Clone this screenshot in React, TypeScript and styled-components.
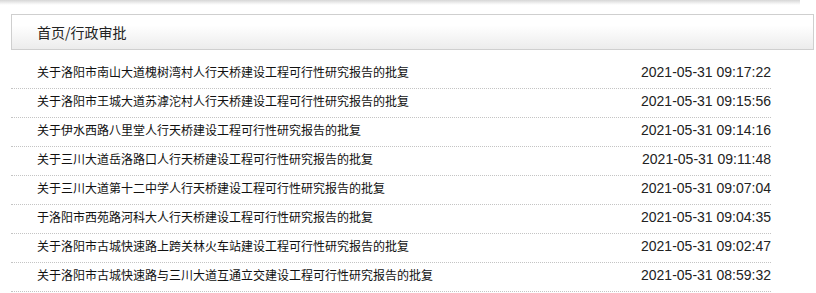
import styled, { createGlobalStyle } from "styled-components";

const GlobalStyle = createGlobalStyle`
  body {
    margin: 0;
    background: #fff;
    font-family: "Liberation Sans", "Noto Sans CJK SC", sans-serif;
    color: #222;
  }
`;

const Page = styled.div`
  width: 800px;
`;

const TopShade = styled.div`
  height: 5px;
  background: linear-gradient(#d6d6d6, #f4f4f4 70%, #fff);
`;

const Crumb = styled.div`
  margin: 9px 0 0 11px;
  width: 776px;
  height: 34px;
  border: 1px solid #cfcfcf;
  background: linear-gradient(#fff 30%, #ececec);
  padding-left: 25px;
  box-sizing: content-box;
  font-family: "Noto Sans CJK SC", sans-serif;
  font-size: 14px;
  line-height: 34px;
  color: #222;
`;

const List = styled.ul`
  list-style: none;
  margin: 10px 0 0 11px;
  padding: 0;
  width: 760px;
`;

const Row = styled.li`
  display: flex;
  justify-content: space-between;
  align-items: baseline;
  height: 28px;
  padding-left: 26px;
  border-bottom: 1px dotted #c4c4c4;
`;

const Title = styled.a`
  font-family: "Noto Sans CJK SC", sans-serif;
  font-size: 12px;
  line-height: 23px;
  color: #111;
  text-decoration: none;
`;

const Time = styled.span`
  font-family: "Liberation Sans", sans-serif;
  font-size: 14px;
  line-height: 23px;
  color: #222;
`;

const items = [
  ["关于洛阳市南山大道槐树湾村人行天桥建设工程可行性研究报告的批复", "2021-05-31 09:17:22"],
  ["关于洛阳市王城大道苏滹沱村人行天桥建设工程可行性研究报告的批复", "2021-05-31 09:15:56"],
  ["关于伊水西路八里堂人行天桥建设工程可行性研究报告的批复", "2021-05-31 09:14:16"],
  ["关于三川大道岳洛路口人行天桥建设工程可行性研究报告的批复", "2021-05-31 09:11:48"],
  ["关于三川大道第十二中学人行天桥建设工程可行性研究报告的批复", "2021-05-31 09:07:04"],
  ["于洛阳市西苑路河科大人行天桥建设工程可行性研究报告的批复", "2021-05-31 09:04:35"],
  ["关于洛阳市古城快速路上跨关林火车站建设工程可行性研究报告的批复", "2021-05-31 09:02:47"],
  ["关于洛阳市古城快速路与三川大道互通立交建设工程可行性研究报告的批复", "2021-05-31 08:59:32"],
];

const App = () => {
  return (
    <Page>
      <GlobalStyle />
      <TopShade />
      <Crumb>首页/行政审批</Crumb>
      <List>
        {items.map(([title, time]) => (
          <Row key={time}>
            <Title href="#">{title}</Title>
            <Time>{time}</Time>
          </Row>
        ))}
      </List>
    </Page>
  );
};

export default App;
